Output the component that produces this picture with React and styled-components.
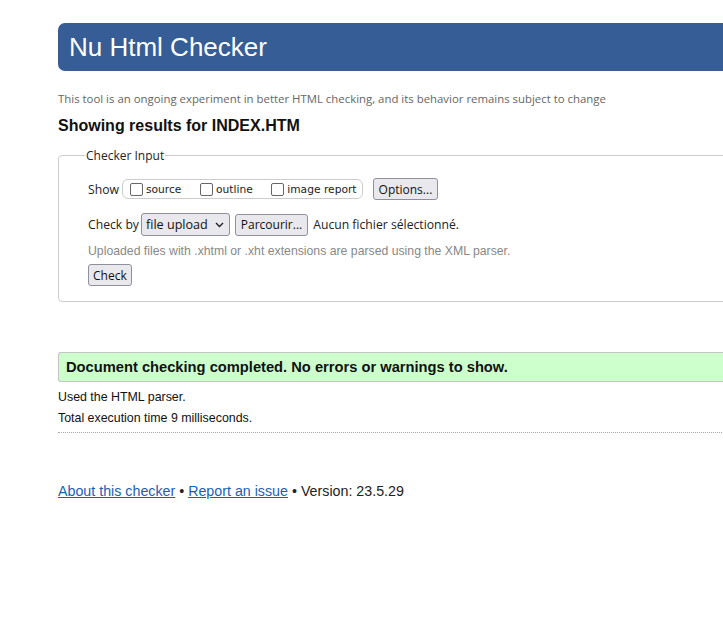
import React from "react";
import styled, { createGlobalStyle } from "styled-components";

const Global = createGlobalStyle`
  html, body { margin: 0; padding: 0; background: #fff; overflow: hidden; }
  body { font-family: "Liberation Sans", Arial, sans-serif; color: #111; }
`;

const Page = styled.div`
  width: 900px;
  margin-left: 58px;
  padding-top: 23px;
`;

const Header = styled.h1`
  margin: 0;
  height: 48px;
  display: flex;
  align-items: center;
  padding-left: 11px;
  background: #365d95;
  color: #fff;
  border-radius: 7px 0 0 7px;
  font-family: "Liberation Sans", Arial, sans-serif;
  font-weight: normal;
  font-size: 26px;
`;

const Tagline = styled.p`
  margin: 20px 0 0;
  font-family: "Open Sans", "Noto Sans", sans-serif;
  font-size: 11.4px;
  color: #666;
`;

const Heading = styled.h2`
  margin: 11px 0 0;
  font-size: 16px;
  font-weight: bold;
  color: #111;
`;

const Fieldset = styled.fieldset`
  margin: 12px 0 0;
  padding: 12px 29px 15px;
  border: 1px solid #ccc;
  border-radius: 4px;
  min-width: 0;
`;

const Legend = styled.legend`
  margin-left: -3px;
  padding: 0 1px;
  font-family: "Open Sans", "Noto Sans", sans-serif;
  font-size: 12px;
  color: #222;
`;

const Row = styled.div`
  display: flex;
  align-items: center;
  gap: ${(p) => p.$gap || 5}px;
  margin-top: ${(p) => p.$mt || 0}px;
  font-family: "Open Sans", "Noto Sans", sans-serif;
  font-size: 12.2px;
  color: #222;
`;

const Label = styled.span`
  margin-right: ${(p) => p.$mr || 0}px;
`;

const Group = styled.span`
  display: inline-flex;
  align-items: center;
  height: 18px;
  padding: 0 5px 0 7px;
  border: 1px solid #ccc;
  border-radius: 6px;
  gap: 18.5px;
  margin-right: 7px;
`;

const Opt = styled.label`
  display: inline-flex;
  align-items: center;
  gap: 3px;
  font-family: "DejaVu Sans", Verdana, sans-serif;
  font-size: 10.7px;
  color: #222;
`;

const Box = styled.span`
  display: inline-block;
  width: 11px;
  height: 11px;
  border: 1px solid #666;
  border-radius: 2px;
  background: #fff;
`;

const Button = styled.span`
  display: inline-flex;
  align-items: center;
  height: ${(p) => p.$h || 19}px;
  padding: 0 ${(p) => p.$px || 4}px;
  border: 1px solid #8f8f9d;
  border-radius: 3px;
  background: #e9e9ed;
  font-family: "Open Sans", "Noto Sans", sans-serif;
  font-size: 12px;
  color: #111;
`;

const Select = styled(Button)`
  gap: 7px;
  padding: 0 5px 0 4px;
  height: 21px;
  font-size: 12.6px;
`;

const Note = styled.p`
  margin: 8px 0 0;
  font-size: 12.25px;
  color: #888;
`;

const Success = styled.div`
  margin-top: 50px;
  height: 28px;
  display: flex;
  align-items: center;
  padding-left: 7px;
  background: #ccffcc;
  border: 1px solid #c4c4c4;
  border-right: none;
  border-radius: 3px 0 0 3px;
  font-weight: bold;
  font-size: 14.7px;
  color: #111;
`;

const Info = styled.p`
  margin: ${(p) => p.$mt || 0}px 0 0;
  font-size: 12.4px;
  color: #111;
`;

const Dotted = styled.hr`
  margin: 7px 0 0;
  border: none;
  border-top: 1px dotted #aaa;
`;

const Footer = styled.p`
  margin: 50px 0 0;
  font-size: 14.25px;
  color: #222;
`;

const Link = styled.a`
  color: #1a5fb4;
  text-decoration: underline;
`;

const Chevron = () => (
  <svg width="9" height="6" viewBox="0 0 9 6" fill="none">
    <path d="M1 1l3.5 3.5L8 1" stroke="#222" strokeWidth="1.4" />
  </svg>
);

export default function App() {
  return (
    <>
      <Global />
      <Page>
        <Header>Nu Html Checker</Header>
        <Tagline>
          This tool is an ongoing experiment in better HTML checking, and its behavior remains subject to change
        </Tagline>
        <Heading>Showing results for INDEX.HTM</Heading>
        <Fieldset>
          <Legend>Checker Input</Legend>
          <Row $mt={2} $gap={3}>
            <Label>Show</Label>
            <Group>
              <Opt><Box />source</Opt>
              <Opt><Box />outline</Opt>
              <Opt><Box />image report</Opt>
            </Group>
            <Button $h={20} $px={5}>Options...</Button>
          </Row>
          <Row $mt={13} $gap={5}>
            <Label $mr={-3}>Check by</Label>
            <Select>file upload <Chevron /></Select>
            <Button $h={20} $px={5}>Parcourir...</Button>
            <Label>Aucun fichier sélectionné.</Label>
          </Row>
          <Note>Uploaded files with .xhtml or .xht extensions are parsed using the XML parser.</Note>
          <Row $mt={6}>
            <Button $h={20}>Check</Button>
          </Row>
        </Fieldset>
        <Success>Document checking completed. No errors or warnings to show.</Success>
        <Info $mt={8}>Used the HTML parser.</Info>
        <Info $mt={7}>Total execution time 9 milliseconds.</Info>
        <Dotted />
        <Footer>
          <Link href="#">About this checker</Link> • <Link href="#">Report an issue</Link> • Version: 23.5.29
        </Footer>
      </Page>
    </>
  );
}
